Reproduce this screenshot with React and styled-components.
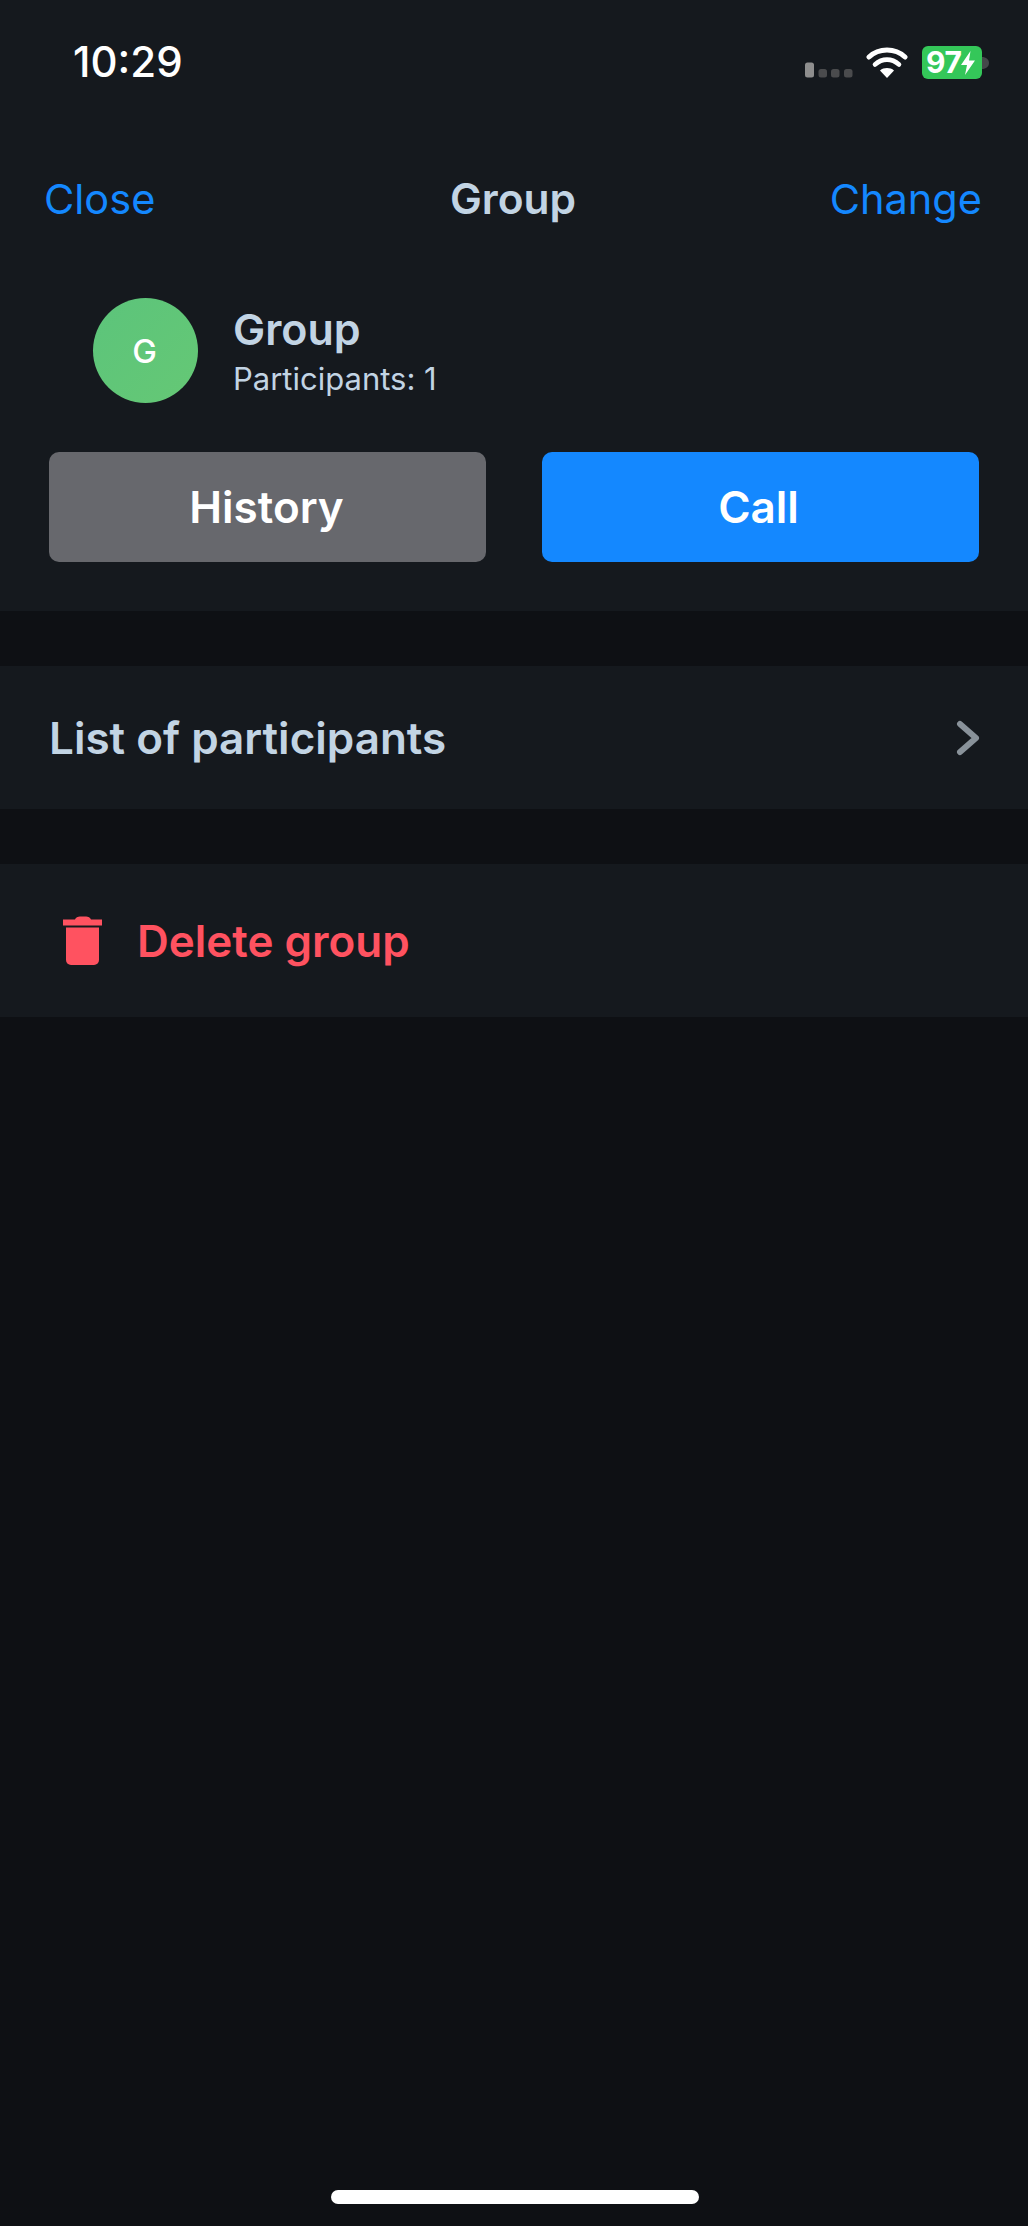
import React from 'react';
import styled, { createGlobalStyle } from 'styled-components';

const Global = createGlobalStyle`
  html, body { margin: 0; padding: 0; background: #0e1014; }
  * { box-sizing: border-box; }
`;
const Page = styled.div`
  width: 1028px; height: 2226px; background: #0e1014; color: #fff;
  font-family: Inter, "Noto Sans", sans-serif;
  display: flex; flex-direction: column; overflow: hidden; position: relative;
`;
const Top = styled.section`
  background: #15191e; height: 611px; display: flex; flex-direction: column;
`;
const StatusBar = styled.div`
  height: 171px; padding: 37px 39px 0 73px; display: flex; justify-content: space-between; align-items: flex-start;
`;
const Clock = styled.span`
  font-size: 42px; line-height: 50px; font-weight: 500; color: #fff;
`;
const Status = styled.div`
  display: flex; align-items: flex-start; padding-top: 9px;
`;
const Nav = styled.nav`
  height: 127px; padding: 0 46px 0 44px; display: grid; grid-template-columns: 1fr auto 1fr; align-items: start;
`;
const NavLink = styled.span`
  font-size: 41.5px; line-height: 56px; font-weight: 400; color: #1488ff;
  text-align: ${p => (p.$end ? 'right' : 'left')};
`;
const NavTitle = styled.span`
  font-size: 42.5px; line-height: 56px; font-weight: 600; color: #c2d4e4;
`;
const Person = styled.div`
  padding-left: 93px; display: flex; align-items: center; gap: 35px; height: 105px;
`;
const Avatar = styled.div`
  width: 105px; height: 105px; border-radius: 50%; flex: none; display: flex; align-items: center; justify-content: center;
  padding-right: 2px;
  background: linear-gradient(135deg, #5cc47b, #65c875); font-size: 33px; font-weight: 500; color: #fff;
`;
const PersonText = styled.div`
  display: flex; flex-direction: column; padding-top: 4px;
`;
const PersonName = styled.span`
  font-size: 43px; line-height: 52px; font-weight: 600; color: #c2d4e4;
`;
const PersonSub = styled.span`
  font-size: 31px; line-height: 48px; font-weight: 400; color: #c2d4e4;
`;
const Buttons = styled.div`
  margin-top: 49px; padding: 0 49px; display: flex; justify-content: space-between;
`;
const Button = styled.div`
  width: 437px; height: 110px; border-radius: 10px; display: flex; align-items: center; justify-content: center;
  padding-right: ${p => (p.$primary ? 4 : 2)}px;
  background: ${p => (p.$primary ? '#1488ff' : '#67686d')};
  font-size: 44px; font-weight: 600; color: #fff;
`;
const Row = styled.div`
  margin-top: 55px; height: ${p => p.$h}px; background: #15191e; display: flex; align-items: center; justify-content: space-between;
  padding: 0 49px;
`;
const RowLabel = styled.span`
  font-size: 44px; font-weight: 600; color: #c2d4e4;
`;
const DeleteLabel = styled.span`
  font-size: 44px; font-weight: 600; color: #ff5260; margin-left: 34px;
`;
const DeleteGroup = styled.div`
  display: flex; align-items: center; padding-left: 14px;
`;
const HomeBar = styled.div`
  position: absolute; left: 331px; top: 2190px; width: 368px; height: 14px; border-radius: 7px; background: #fff;
`;

const Signal = () => (
  <svg width="48" height="16" viewBox="0 0 48 16" style={{ marginTop: 16 }}>
    <rect x="0" y="0.5" width="9" height="15" rx="2.5" fill="#8e8e8e" />
    <rect x="13.500" y="7" width="8.5" height="8.5" rx="2.5" fill="#4a4b4d" />
    <rect x="26" y="7" width="8.5" height="8.5" rx="2.5" fill="#4a4b4d" />
    <rect x="39" y="7" width="8.5" height="8.5" rx="2.5" fill="#4a4b4d" />
  </svg>
);
const Wifi = () => (
  <svg width="42" height="32" viewBox="0 0 42 32" style={{ marginLeft: 13, marginTop: 1 }}>
    <path d="M3 11C8 6.300 14 4 21 4s13 2.300 18 7" fill="none" stroke="#fff" strokeWidth="5" strokeLinecap="round" transform="translate(0 -1)" />
    <path d="M9 17.500C12.500 14.400 16.500 12.600 21 12.600s8.500 1.800 12 4.900" fill="none" stroke="#fff" strokeWidth="4.6" strokeLinecap="round" />
    <path d="M21 31l-7-7.600c2-1.500 4.400-2.300 7-2.300s5 .8 7 2.300z" fill="#fff" />
  </svg>
);
const BatteryWrap = styled.div`
  margin-left: 14px; display: flex; align-items: center;
`;
const BatteryBody = styled.div`
  width: 60px; height: 33px; background: #34c759; border-radius: 6px; display: flex; align-items: center; padding-left: 4px;
  font-size: 30px; font-weight: 700; color: #fff; line-height: 33px; letter-spacing: -0.5px;
`;
const Battery = () => (
  <BatteryWrap>
    <BatteryBody>
      97
      <svg width="16" height="26" viewBox="0 0 16 26" style={{ marginLeft: -1 }}>
        <path d="M10.500 1L1 15h6l-2 10L15 10.500H9z" fill="#fff" />
      </svg>
    </BatteryBody>
    <svg width="7" height="12" viewBox="0 0 7 12">
      <path d="M0 0c4 0 7 2.500 7 6s-3 6-7 6z" fill="#45474a" />
    </svg>
  </BatteryWrap>
);
const Chevron = () => (
  <svg width="24" height="36" viewBox="0 0 24 36" style={{ marginRight: -1 }}>
    <path d="M4 4l16 14L4 32" fill="none" stroke="#89929a" strokeWidth="6" strokeLinecap="round" strokeLinejoin="round" />
  </svg>
);
const Trash = () => (
  <svg width="40" height="50" viewBox="0 0 40 50">
    <path d="M0 3.500h12C13 1 15 .5 20 .5s7 .5 8 3h11v6H0z" fill="#ff5260" />
    <path d="M3 11.500h33V44a5 5 0 0 1-5 5H8a5 5 0 0 1-5-5z" fill="#ff5260" />
  </svg>
);

export default function App() {
  return (
    <Page>
      <Global />
      <Top>
        <StatusBar>
          <Clock>10:29</Clock>
          <Status>
            <Signal />
            <Wifi />
            <Battery />
          </Status>
        </StatusBar>
        <Nav>
          <NavLink>Close</NavLink>
          <NavTitle>Group</NavTitle>
          <NavLink $end>Change</NavLink>
        </Nav>
        <Person>
          <Avatar>G</Avatar>
          <PersonText>
            <PersonName>Group</PersonName>
            <PersonSub>Participants: 1</PersonSub>
          </PersonText>
        </Person>
        <Buttons>
          <Button>History</Button>
          <Button $primary>Call</Button>
        </Buttons>
      </Top>
      <Row $h={143}>
        <RowLabel>List of participants</RowLabel>
        <Chevron />
      </Row>
      <Row $h={153}>
        <DeleteGroup>
          <Trash />
          <DeleteLabel>Delete group</DeleteLabel>
        </DeleteGroup>
      </Row>
      <HomeBar />
    </Page>
  );
}
